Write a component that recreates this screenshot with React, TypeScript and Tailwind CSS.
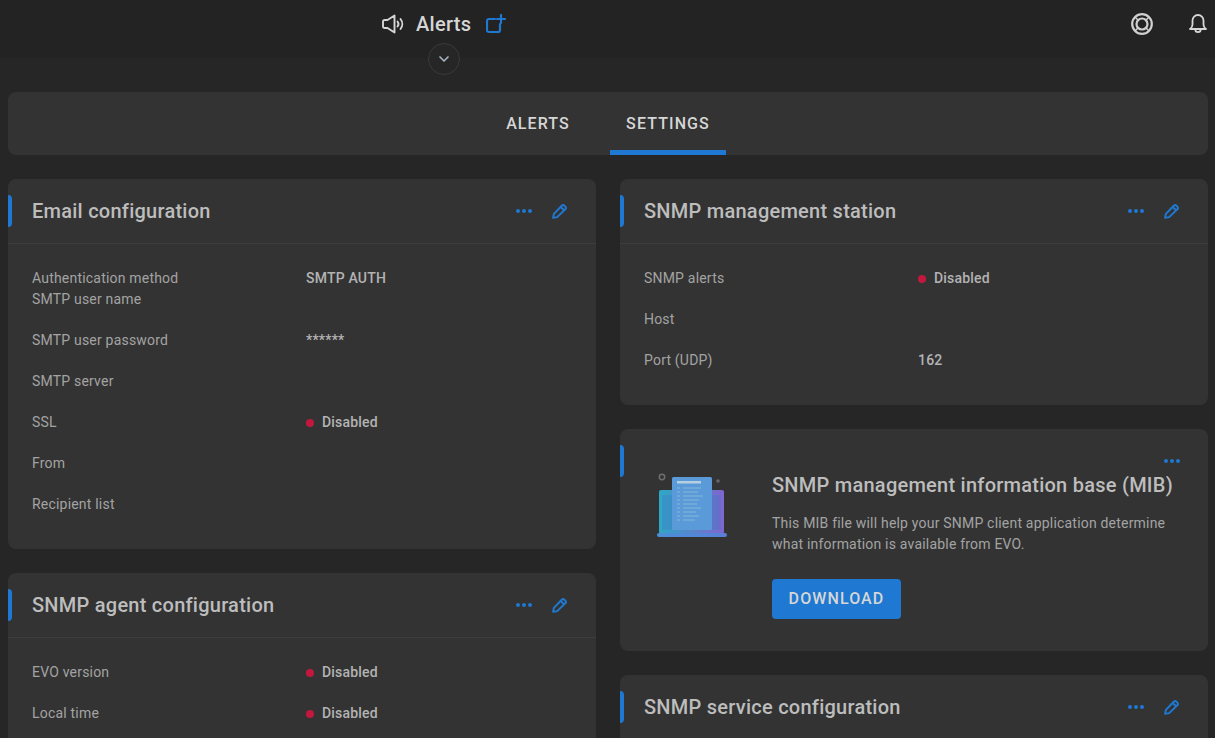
import { ChevronDown } from "lucide-react";

const font = { fontFamily: "Roboto, sans-serif" };

function Dots() {
  return (
    <svg width="16" height="4" viewBox="0 0 16 4" fill="#1f78d1">
      <circle cx="2" cy="2" r="2" />
      <circle cx="8" cy="2" r="2" />
      <circle cx="14" cy="2" r="2" />
    </svg>
  );
}

function PencilIcon() {
  return (
    <svg width="16" height="16" viewBox="0 0 17 17" fill="none" stroke="#1f78d1" strokeWidth="2.100" strokeLinejoin="round">
      <path d="M1.200 15.800l.8-4.300L10.600 2.600a1.600 1.600 0 0 1 2.300 0l1.500 1.500a1.600 1.600 0 0 1 0 2.300L5.500 15z" />
      <path d="M9.300 4.200l3.500 3.500" />
    </svg>
  );
}

function Status() {
  return (
    <span className="flex items-center gap-2">
      <span className="h-2 w-2 rounded-full bg-[#c2183f]" />
      Disabled
    </span>
  );
}

interface Row {
  label: string;
  value?: React.ReactNode;
  tight?: boolean;
}

function Card({ title, rows }: { title: string; rows: Row[] }) {
  return (
    <section className="relative rounded-lg bg-[#333333]">
      <span className="absolute top-4 left-0 h-8 w-1 rounded-r bg-[#1f78d1]" />
      <header className="flex h-[65px] items-center justify-between border-b border-[#3d3d3d] pr-7 pl-6">
        <h2 className="text-xl font-medium tracking-[0.25px] text-[#bdbdbd]">{title}</h2>
        <div className="flex items-center gap-5">
          <Dots />
          <PencilIcon />
        </div>
      </header>
      <div className="px-6 pt-6 pb-[14px]">
        {rows.map((row) => (
          <div
            key={row.label}
            className={`flex text-sm leading-[21px] tracking-[0.2px] ${row.tight ? "" : "mb-5"}`}
          >
            <div className="w-[274px] text-[#a3a3a3]">{row.label}</div>
            <div className="font-medium text-[#b3b3b3]">{row.value}</div>
          </div>
        ))}
      </div>
    </section>
  );
}

export default function App() {
  return (
    <div style={font} className="h-screen overflow-hidden bg-[#262626]">
      <div className="relative flex h-[58px] items-start justify-between bg-[#232323] pt-[13px] pr-2 pl-[382px]">
        <div className="flex h-[22px] items-center">
          <svg width="22" height="20" viewBox="0 0 22 20" fill="none" stroke="#d6d6d6" strokeWidth="1.900" strokeLinecap="round" strokeLinejoin="round">
            <path d="M2.500 6h3L12.500 1.500v17L5.500 14h-3A1.500 1.500 0 0 1 1 12.500v-5A1.500 1.500 0 0 1 2.500 6z" />
            <path d="M15.500 7.500a4 4 0 0 1 0 5" />
            <path d="M18.500 5a8 8 0 0 1 0 10" />
          </svg>
          <span className="ml-[12px] text-xl font-medium tracking-[0.3px] text-[#d6d6d6]">Alerts</span>
          <svg className="ml-[15px]" width="20" height="20" viewBox="0 0 20 20" fill="none" stroke="#1f78d1" strokeWidth="2.200" strokeLinecap="round">
            <path d="M9 5H3a2 2 0 0 0-2 2v9a2 2 0 0 0 2 2h9a2 2 0 0 0 2-2v-6" />
            <path d="M15 1v8M11 5h8" />
          </svg>
        </div>
        <div className="flex items-center gap-9">
          <svg width="22" height="22" viewBox="0 0 22 22" fill="none" stroke="#d0d0d0" strokeWidth="2.200">
            <circle cx="11" cy="11" r="9.800" />
            <circle cx="11" cy="11" r="5.500" />
            <path d="M4 4l3.200 3.200M18 4l-3.200 3.200M4 18l3.200-3.200M18 18l-3.200-3.200" strokeWidth="1.500" />
          </svg>
          <svg width="18" height="20" viewBox="0 0 18 20" fill="none" stroke="#d6d6d6" strokeWidth="1.800" strokeLinejoin="round">
            <path d="M9 1a5.500 5.500 0 0 0-5.500 5.500v4c0 2-1 3.500-2.500 4.500h16c-1.500-1-2.500-2.500-2.500-4.500v-4A5.500 5.500 0 0 0 9 1z" />
            <path d="M6.300 15.500a2.700 2.700 0 0 0 5.400 0" />
          </svg>
        </div>
        <div className="absolute top-[43px] left-[428px] flex h-8 w-8 items-center justify-center rounded-full border border-[#3a3a3a] bg-[#262626]">
          <ChevronDown size={16} color="#a9b4c2" strokeWidth={2.5} />
        </div>
      </div>

      <div className="pt-[34px] pr-[7px] pl-2">
        <nav className="flex h-[63px] justify-center gap-6 rounded-lg bg-[#333333]">
          <div className="flex w-24 items-center justify-center text-base font-medium tracking-[1.1px] text-[#d6d6d6]">
            ALERTS
          </div>
          <div className="flex w-[116px] items-center justify-center border-b-[5px] border-[#1f78d1] pt-[5px] text-base font-medium tracking-[1.1px] text-[#d6d6d6]">
            SETTINGS
          </div>
        </nav>

        <div className="mt-6 grid grid-cols-2 gap-6">
          <div className="flex flex-col gap-6">
            <Card
              title="Email configuration"
              rows={[
                { label: "Authentication method", value: "SMTP AUTH", tight: true },
                { label: "SMTP user name" },
                { label: "SMTP user password", value: "******" },
                { label: "SMTP server" },
                { label: "SSL", value: <Status /> },
                { label: "From" },
                { label: "Recipient list" },
              ]}
            />
            <Card
              title="SNMP agent configuration"
              rows={[
                { label: "EVO version", value: <Status /> },
                { label: "Local time", value: <Status /> },
              ]}
            />
          </div>

          <div className="flex flex-col gap-6">
            <Card
              title="SNMP management station"
              rows={[
                { label: "SNMP alerts", value: <Status /> },
                { label: "Host" },
                { label: "Port (UDP)", value: "162" },
              ]}
            />

            <section className="relative flex h-[222px] rounded-lg bg-[#333333] pt-[42px] pl-[152px]">
              <span className="absolute top-4 left-0 h-8 w-1 rounded-r bg-[#1f78d1]" />
              <div className="absolute top-[30px] right-7">
                <Dots />
              </div>
              <svg className="absolute top-[42px] left-[36px]" width="72" height="70" viewBox="0 0 72 70">
                <defs>
                  <linearGradient id="lap" x1="0" y1="0" x2="1" y2="0">
                    <stop offset="0" stopColor="#2ea8c6" />
                    <stop offset="1" stopColor="#8065cf" />
                  </linearGradient>
                  <linearGradient id="base" x1="0" y1="0" x2="1" y2="0">
                    <stop offset="0" stopColor="#4a90d8" />
                    <stop offset="1" stopColor="#5a7ed8" />
                  </linearGradient>
                </defs>
                <circle cx="6" cy="6" r="2.700" fill="none" stroke="#6f6f6f" strokeWidth="1.500" />
                <circle cx="62" cy="10" r="1.800" fill="#666666" />
                <rect x="3" y="19" width="65" height="44" rx="2" fill="url(#lap)" />
                <rect x="6" y="24" width="59" height="35" fill="#3d7cc6" opacity="0.350" />
                <rect x="1" y="62" width="70" height="4" rx="2" fill="url(#base)" />
                <rect x="16" y="6" width="40" height="53" rx="1.500" fill="#5b9ad8" />
                <rect x="21" y="10" width="24" height="2.500" fill="#b6cfe0" />
                <path
                  d="M21 17h3M27 17h18M21 21h3M27 21h15M21 25h3M27 25h20M21 29h3M27 29h16M21 33h3M27 33h14M21 37h3M27 37h18M21 41h3M27 41h13M21 45h3M27 45h16M21 49h3M27 49h12"
                  stroke="#86b6dc"
                  strokeWidth="1.100"
                />
              </svg>
              <div>
                <h2 className="text-xl leading-7 font-medium tracking-[0.25px] text-[#bdbdbd]">
                  SNMP management information base (MIB)
                </h2>
                <p className="mt-[14px] text-sm leading-[21px] tracking-[0.2px] text-[#a3a3a3]">
                  This MIB file will help your SNMP client application determine
                  <br />
                  what information is available from EVO.
                </p>
                <button className="mt-6 h-10 w-[129px] rounded bg-[#1f78d1] text-base font-medium tracking-[1.1px] text-[#d6d6d6]">
                  DOWNLOAD
                </button>
              </div>
            </section>

            <Card title="SNMP service configuration" rows={[]} />
          </div>
        </div>
      </div>
    </div>
  );
}
